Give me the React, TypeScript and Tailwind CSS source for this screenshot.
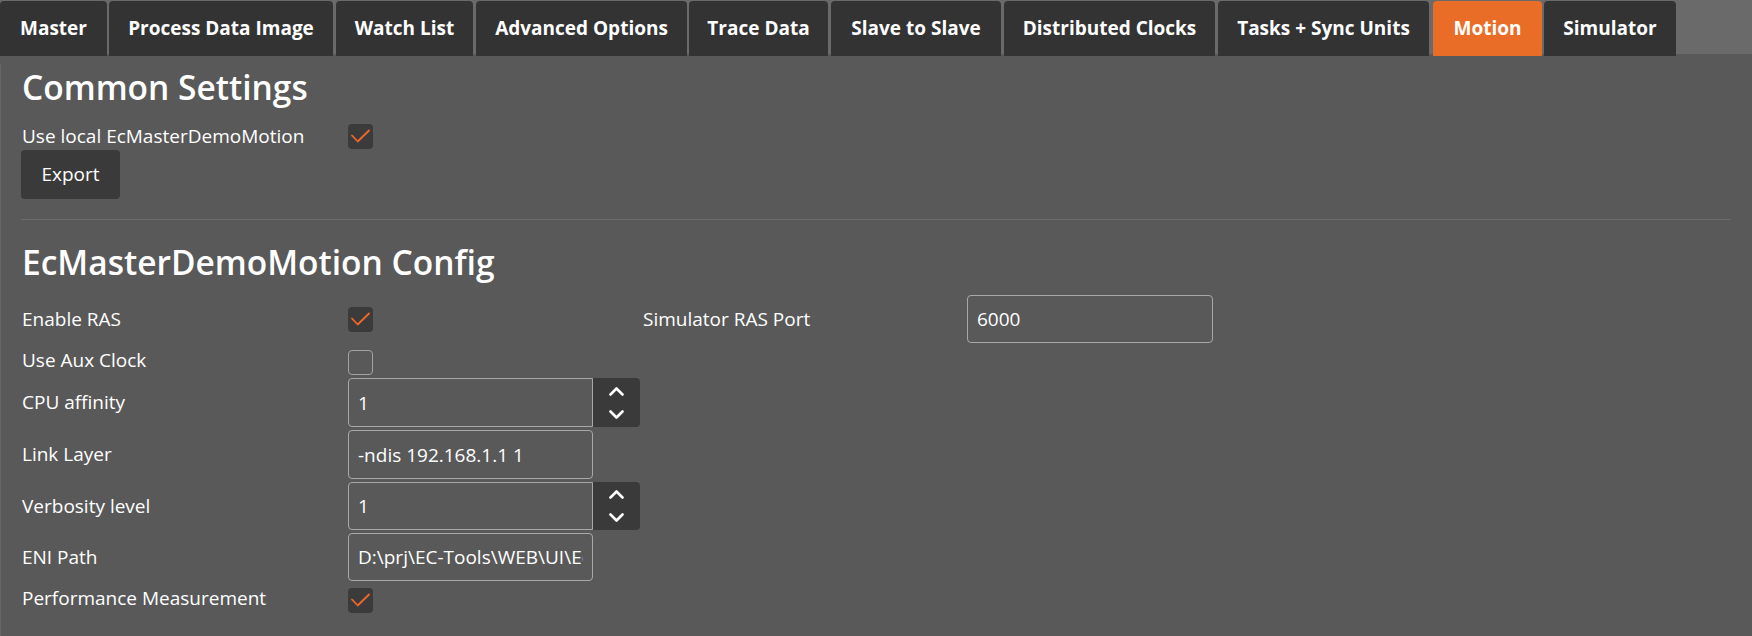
import React from "react";

const tabs: { label: string; cls: string; active?: boolean }[] = [
  { label: "Master", cls: "w-[107px]" },
  { label: "Process Data Image", cls: "w-[224px] ml-[2px]" },
  { label: "Watch List", cls: "w-[137px] ml-[3px]" },
  { label: "Advanced Options", cls: "w-[211px] ml-[3px]" },
  { label: "Trace Data", cls: "w-[139px] ml-[2px]" },
  { label: "Slave to Slave", cls: "w-[170px] ml-[3px]" },
  { label: "Distributed Clocks", cls: "w-[211px] ml-[3px]" },
  { label: "Tasks + Sync Units", cls: "w-[211px] ml-[3px]" },
  { label: "Motion", cls: "w-[109px] ml-[4px]", active: true },
  { label: "Simulator", cls: "w-[132px] ml-[2px]" },
];

function Check({ checked }: { checked: boolean }) {
  if (!checked) {
    return <div className="w-[25px] h-[25px] rounded-[4px] border border-[#a3a3a3] shrink-0" />;
  }
  return (
    <div className="w-[25px] h-[25px] rounded-[4px] bg-[#3b3b3b] shrink-0">
      <svg width="25" height="25" viewBox="0 0 25 25">
        <path d="M4 11.5 L9.7 17.5 L21 6.5" fill="none" stroke="#f0682a" strokeWidth="1.8" strokeLinecap="round" strokeLinejoin="round" />
      </svg>
    </div>
  );
}

function Chevron({ up }: { up: boolean }) {
  return (
    <svg width="15" height="9" viewBox="0 0 15 9">
      <polyline
        points={up ? "1.5,7.5 7.5,1.5 13.5,7.5" : "1.5,1.5 7.5,7.5 13.5,1.5"}
        fill="none"
        stroke="#ffffff"
        strokeWidth="2.6"
        strokeLinecap="round"
        strokeLinejoin="round"
      />
    </svg>
  );
}

function NumberBox({ value, h }: { value: string; h: string }) {
  return (
    <div className={`flex ${h}`}>
      <input
        readOnly
        value={value}
        className="w-[245px] h-full border border-[#a8a8a8] rounded-l-[4px] bg-transparent px-[9px] text-[19px] text-white outline-none"
      />
      <div className="w-[47px] h-full bg-[#3a3a3a] rounded-r-[4px] flex flex-col items-center justify-center">
        <div className="h-[23px] flex items-center justify-center">
          <Chevron up />
        </div>
        <div className="h-[23px] flex items-center justify-center">
          <Chevron up={false} />
        </div>
      </div>
    </div>
  );
}

function TextBox({ value, w, h }: { value: string; w: string; h: string }) {
  return (
    <input
      readOnly
      value={value}
      className={`${w} ${h} border border-[#a8a8a8] rounded-[4px] bg-transparent px-[9px] text-[19px] text-white outline-none`}
    />
  );
}

export default function App() {
  return (
    <div className="w-[1752px] h-[636px] bg-[#595959] text-white font-['Open_Sans',sans-serif] overflow-hidden">
      <div className="flex h-[56px] pt-[1px] bg-[linear-gradient(to_bottom,#6a6a6a_54px,#595959_54px)]">
        {tabs.map((t) => (
          <div
            key={t.label}
            className={`${t.cls} h-[55px] rounded-t-[4px] flex items-center justify-center text-[19px] font-bold ${
              t.active ? "bg-[#ea6d27]" : "bg-[#333333]"
            }`}
          >
            {t.label}
          </div>
        ))}
      </div>

      <div className="border-l border-[#666666] pl-[20px] pr-[22px] h-[580px]">
        <h1 className="mt-[8px] pl-[1px] text-[33.5px] leading-[46px] font-semibold">Common Settings</h1>
        <div className="mt-[12px] h-[28px] flex items-center">
          <div className="w-[327px] pl-[1px] text-[19px]">Use local EcMasterDemoMotion</div>
          <Check checked />
        </div>
        <button className="w-[99px] h-[49px] bg-[#3a3a3a] rounded-[4px] text-[19px] text-white">Export</button>
        <div className="mt-[20px] border-t border-[#6c6c6c]" />
        <h1 className="mt-[19px] pl-[1px] text-[33.5px] leading-[46px] font-semibold">EcMasterDemoMotion Config</h1>

        <div className="mt-[10px] flex flex-col gap-[3px] text-[19px]">
          <div className="flex items-center h-[48px]">
            <div className="w-[327px] pl-[1px]">Enable RAS</div>
            <div className="w-[295px] flex items-center">
              <Check checked />
            </div>
            <div className="w-[324px]">Simulator RAS Port</div>
            <TextBox value="6000" w="w-[246px]" h="h-[48px]" />
          </div>
          <div className="flex items-center h-[29px]">
            <div className="w-[327px] pl-[1px]">Use Aux Clock</div>
            <div className="self-end">
              <Check checked={false} />
            </div>
          </div>
          <div className="flex items-center h-[49px]">
            <div className="w-[327px] pl-[1px]">CPU affinity</div>
            <NumberBox value="1" h="h-[49px]" />
          </div>
          <div className="flex items-center h-[49px]">
            <div className="w-[327px] pl-[1px]">Link Layer</div>
            <TextBox value="-ndis 192.168.1.1 1" w="w-[245px]" h="h-[49px]" />
          </div>
          <div className="flex items-center h-[48px]">
            <div className="w-[327px] pl-[1px]">Verbosity level</div>
            <NumberBox value="1" h="h-[48px]" />
          </div>
          <div className="flex items-center h-[48px]">
            <div className="w-[327px] pl-[1px]">ENI Path</div>
            <TextBox value={"D:\\prj\\EC-Tools\\WEB\\UI\\EcMasterDemoMotion\\eni.xml"} w="w-[245px]" h="h-[48px]" />
          </div>
          <div className="flex items-center h-[29px]">
            <div className="w-[327px] pl-[1px]">Performance Measurement</div>
            <div className="self-end">
              <Check checked />
            </div>
          </div>
        </div>
      </div>
    </div>
  );
}
